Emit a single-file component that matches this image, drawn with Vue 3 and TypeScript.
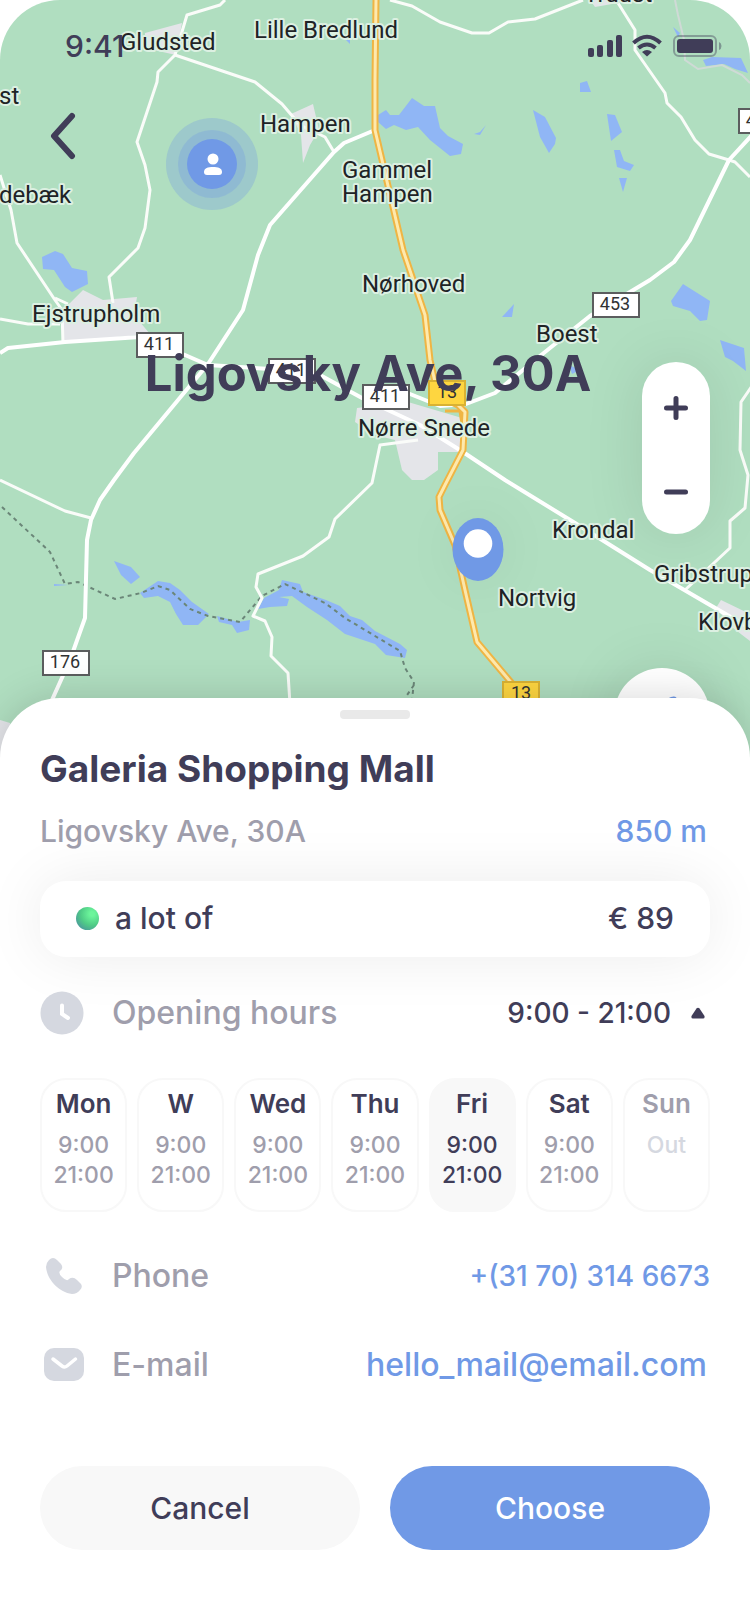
<script setup lang="ts">
import { ref } from 'vue'

interface Place { name: string; x: number; y: number }
interface Sign { label: string; x: number; y: number }
interface Day { name: string; open: string; close?: string; state?: 'current' | 'closed' }

const places: Place[] = [
  { name: 'Gludsted', x: 120, y: 50 },
  { name: 'Lille Bredlund', x: 254, y: 38 },
  { name: 'Truust', x: 584, y: 2 },
  { name: 'Hampen', x: 260, y: 132 },
  { name: 'Gammel', x: 342, y: 178 },
  { name: 'Hampen', x: 342, y: 202 },
  { name: 'Nørhoved', x: 362, y: 292 },
  { name: 'Ejstrupholm', x: 32, y: 322 },
  { name: 'Boest', x: 536, y: 342 },
  { name: 'Nørre Snede', x: 358, y: 436 },
  { name: 'Krondal', x: 552, y: 538 },
  { name: 'Gribstrup', x: 654, y: 582 },
  { name: 'Nortvig', x: 498, y: 606 },
  { name: 'Klovborg', x: 698, y: 630 },
  { name: 'debæk', x: -1, y: 203 },
  { name: 'st', x: -1, y: 104 },
]

const signs: Sign[] = [
  { label: '411', x: 137, y: 333 },
  { label: '411', x: 269, y: 359 },
  { label: '411', x: 363, y: 385 },
  { label: '453', x: 593, y: 293 },
  { label: '176', x: 43, y: 651 },
  { label: '453', x: 739, y: 109 },
]

const mainSigns: Sign[] = [
  { label: '13', x: 429, y: 381 },
  { label: '13', x: 503, y: 682 },
]

const days: Day[] = [
  { name: 'Mon', open: '9:00', close: '21:00' },
  { name: 'W', open: '9:00', close: '21:00' },
  { name: 'Wed', open: '9:00', close: '21:00' },
  { name: 'Thu', open: '9:00', close: '21:00' },
  { name: 'Fri', open: '9:00', close: '21:00', state: 'current' },
  { name: 'Sat', open: '9:00', close: '21:00' },
  { name: 'Sun', open: 'Out', state: 'closed' },
]

const expanded = ref(true)
</script>

<template>
  <main class="screen">
    <section class="map">
      <svg class="canvas" viewBox="0 0 750 774" preserveAspectRatio="xMidYMin slice" aria-hidden="true">
        <rect width="750" height="774" fill="#b0dec0" />
        <g fill="#e4e5e9">
          <path d="M145 33 182 23 176 55 145 48Z" />
          <path d="M291 114 313 104 319 130 310 145 303 163 301 135Z" />
          <path d="M83 290 103 300 137 297 134 315 150 334 64 342 61 310 70 303Z" />
          <path d="M357 408 408 402 462 418 460 452 438 452 438 470 424 480 412 480 402 470 395 440 375 435 355 422Z" />
          <path d="M716 608 721 600 750 614V641L733 628Z" />
          <path d="M0 720 10 723 20 774H0Z" />
          <path d="M590 0 595 7 612 4 616 0Z" />
        </g>
        <g fill="#90b6f5">
          <path d="M378 115 386 110 390 115 399 115 412 98 424 106H435L440 128 448 136 463 144 461 154 450 156 430 140 418 127 406 130 394 125 386 129 378 122Z" />
          <path d="M474 134 480 132 486 125 480 135Z" />
          <path d="M533 110 545 117 556 138 555 144 549 153 540 137Z" />
          <path d="M580 83 587 81 591 92H580Z" />
          <path d="M607 114 615 115 622 132 611 141Z" />
          <path d="M614 150 620 150 624 161 634 165 630 171 617 167Z" />
          <path d="M619 178H627L623 192Z" />
          <path d="M703 60 712 57 741 58 748 73 735 69 724 64 706 66Z" />
          <path d="M673 27 680 33 678 37Z" />
          <path d="M344 38H350V44Z" />
          <path d="M42 257 55 251 63 254 72 268 87 271 88 284 72 292 65 287 54 270 43 269Z" />
          <path d="M671 301 683 284 710 301 707 320 700 321 690 311 673 306Z" />
          <path d="M720 340 744 348 746 371 733 361 725 357Z" />
          <path d="M502 317 514 304 512 317Z" />
          <path d="M569 365 580 370 572 374Z" />
          <path d="M114 561 131 567 140 577 131 584 121 575Z" />
          <path d="M54 584 68 585 54 586Z" />
          <path d="M140 593 158 581 170 583 180 590 192 602 209 614 198 625 183 625 176 614 170 602 158 596 144 598Z" />
          <path d="M217 616 238 622 250 620 249 630 237 633 232 625 219 622Z" />
          <path d="M258 609 264 598 279 590 282 580 300 584 303 592 326 600 340 606 350 616 362 620 375 631 400 644 407 650 405 658 386 655 375 644 345 634 327 620 307 607 292 596 279 597 289 599 287 606 270 607Z" />
        </g>
        <path
          d="M2 507 50 552 65 584 78 582 115 599 141 593 158 586 170 590 190 609 208 616 240 622 262 596 285 584 325 603 345 618 400 651 405 668 414 682 412 700M414 685 405 698"
          fill="none" stroke="#6b8678" stroke-width="2" stroke-dasharray="4 4"
        />
        <path
          d="M675 0 678 15 684 40 685 60 698 69 722 65 742 75 750 83"
          fill="none" stroke="#cfdad6" stroke-width="2"
        />
        <g fill="none" stroke="#fafcf9" stroke-width="3" stroke-linejoin="round">
          <path d="M225 0 220 5 187 15 175 55 158 72 157 82 137 142 145 165 150 190 145 228 138 248 109 277 113 303" />
          <path d="M175 55 255 82 282 104 300 125 325 137 334 152" />
          <path d="M0 175 11 210 17 243 55 300 62 310 63 344M55 298 68 304" />
          <path d="M0 319 28 324H60" />
          <path d="M390 0 412 6 440 22 472 33H489L508 22 535 19 583 0" />
          <path d="M618 3 635 30V50L665 93 667 103 681 117 695 140 709 154 729 160 735 162 750 177" />
          <path d="M0 480 65 511 91 518" />
          <path d="M418 440 380 445 372 483 335 519 329 537 303 556 258 574 256 587 262 598 253 616 265 621 272 637 271 656 288 673 290 704" />
          <path d="M752 386 741 402 740 450 748 475 745 508 730 521V548L685 590" />
        </g>
        <g fill="none" stroke="#ffffff" stroke-width="4" stroke-linejoin="round">
          <path d="M375 130 344 143 334 152 270 225 258 255 243 310 208 364 134 453 114 480 100 500 91 520 87 540 85 618 70 660 52 700 30 760" />
          <path d="M0 353 8 348 65 342 140 337 185 355 208 365 270 369 320 375 362 398 420 425 463 452 505 480 575 523 650 570 710 605 750 628" />
          <path d="M400 390 440 406 466 404 495 393 540 356 590 316 650 280 674 262 690 240 729 160 752 135" />
        </g>
        <g fill="none" stroke-linejoin="round">
          <path d="M445 411H460L462 424" stroke="#efb544" stroke-width="3" />
          <path d="M376 0 375 80V130L403 250 425 315 430 360 438 395 458 405 465 412 463 450 445 485 439 497 440 510 455 545 465 590 477 642 520 693" stroke="#efb544" stroke-width="7" />
          <path d="M376 0 375 80V130L403 250 425 315 430 360 438 395 458 405 465 412 463 450 445 485 439 497 440 510 455 545 465 590 477 642 520 693" stroke="#fee9ad" stroke-width="3" />
        </g>
        <g v-for="(sign, i) in signs" :key="`s${i}`">
          <rect :x="sign.x" :y="sign.y" width="46" height="24" fill="#fff" stroke="#5b5d5e" stroke-width="2" />
          <text class="sign" :x="sign.x + 22" :y="sign.y + 17">{{ sign.label }}</text>
        </g>
        <g v-for="(sign, i) in mainSigns" :key="`m${i}`">
          <rect :x="sign.x" :y="sign.y" width="36" height="24" fill="#fed640" stroke="#d9b233" stroke-width="2" />
          <text class="sign" :x="sign.x + 18" :y="sign.y + 17">{{ sign.label }}</text>
        </g>
        <text v-for="(place, i) in places" :key="`p${i}`" class="place" :x="place.x" :y="place.y">{{ place.name }}</text>

        <g fill="#7099e6">
          <circle cx="212" cy="164" r="46" fill-opacity=".3" />
          <circle cx="212" cy="164" r="34" fill-opacity=".3" />
          <circle cx="212" cy="164" r="25" />
        </g>
        <g fill="#fff">
          <circle cx="213" cy="159" r="5.5" />
          <path d="M204 172c0-4 4-5 9-5s9 1 9 5c0 2-1 3-3 3h-12c-2 0-3-1-3-3Z" />
        </g>
        <g class="pin">
          <ellipse cx="478" cy="549.5" rx="25.5" ry="31.5" fill="#7099e6" />
          <circle cx="478" cy="543.5" r="14.3" fill="#fff" />
        </g>
      </svg>

      <header class="overlay">
        <div class="status">
          <span class="clock">9:41</span>
          <svg class="indicators" width="136" height="26" viewBox="586 33 136 26" aria-hidden="true">
            <g fill="#403d58">
              <rect x="588" y="48" width="6" height="9" rx="2" />
              <rect x="597" y="45" width="6" height="12" rx="2" />
              <rect x="607" y="40" width="6" height="17" rx="2" />
              <rect x="616" y="35" width="6" height="22" rx="2" />
              <rect x="677" y="39" width="36" height="14" rx="3" />
              <path d="M642 52q5-4 10 0l-5 4.500Z" />
            </g>
            <g fill="none" stroke="#403d58">
              <path d="M633.500 43q13.500-12.500 27 0" stroke-width="4" />
              <path d="M638.500 48q8.500-7 17 0" stroke-width="4" />
              <rect x="674" y="36" width="42" height="20" rx="5" stroke-width="2" stroke-opacity=".4" />
            </g>
            <path d="M719 42q2.500 1 2.500 4t-2.500 4Z" fill="#403d58" fill-opacity=".45" />
          </svg>
        </div>
        <button class="back" type="button" aria-label="Back">
          <svg width="28" height="48" viewBox="0 0 28 48"><path d="M24 4 6 24 24 44" fill="none" stroke="#403d58" stroke-width="6" stroke-linecap="round" stroke-linejoin="round" /></svg>
        </button>
      </header>

      <h2 class="map-title">Ligovsky Ave, 30A</h2>

      <div class="zoom">
        <button type="button" aria-label="Zoom in">
          <svg width="24" height="24" viewBox="0 0 24 24"><path d="M12 2.500V21.500M2.500 12H21.500" stroke="#403d58" stroke-width="5" stroke-linecap="round" /></svg>
        </button>
        <button type="button" aria-label="Zoom out">
          <svg width="24" height="24" viewBox="0 0 24 24"><path d="M2.500 12H21.500" stroke="#403d58" stroke-width="5" stroke-linecap="round" /></svg>
        </button>
      </div>
      <button class="locate" type="button" aria-label="My location">
        <svg width="40" height="40" viewBox="0 0 40 40"><path d="M29 1Q36-1 35 6L25 34Q22 38 20 33L17 23 5 18Q2 15 6 12Z" fill="#7099e6" /></svg>
      </button>
    </section>

    <section class="sheet">
      <div class="handle"></div>
      <h1>Galeria Shopping Mall</h1>
      <div class="row address">
        <span>Ligovsky Ave, 30A</span>
        <span class="distance">850 m</span>
      </div>

      <div class="row card">
        <span class="dot"></span>
        <span>a lot of</span>
        <span class="end">€ 89</span>
      </div>

      <div class="row info hours">
        <svg class="icon" width="44" height="44" viewBox="0 0 44 44" aria-hidden="true">
          <circle cx="22" cy="22" r="21.500" fill="#d5d8e0" />
          <path d="M22 14.500V23L28 27" fill="none" stroke="#fff" stroke-width="4" stroke-linecap="round" />
        </svg>
        <span>Opening hours</span>
        <button class="end figures toggle" type="button" :aria-expanded="expanded" @click="expanded = !expanded">
          9:00 - 21:00
          <svg :class="{ flipped: !expanded }" width="14" height="12" viewBox="0 0 14 12"><path d="M5.500 1.500Q7 0 8.500 1.500L13.500 9Q14 11.500 12 11.500H2Q0 11.500 .5 9Z" fill="#403d58" /></svg>
        </button>
      </div>

      <ul v-show="expanded" class="days">
        <li v-for="day in days" :key="day.name" :class="day.state">
          <strong>{{ day.name }}</strong>
          <span>{{ day.open }}</span>
          <span v-if="day.close">{{ day.close }}</span>
        </li>
      </ul>

      <div class="row info phone">
        <svg class="icon" width="44" height="44" viewBox="40 1254 44 44" aria-hidden="true">
          <path d="M49 1260Q53 1256 57 1260L61 1264Q64 1268 60 1271 58 1273 62 1277 67 1282 69 1279 73 1276 77 1280L81 1284Q83 1287 80 1290 77 1294 72 1294C58 1292 47 1279 46 1267Q46 1263 49 1260Z" fill="#d5d8e0" />
        </svg>
        <span>Phone</span>
        <a class="end figures" href="tel:+31703146673">+(31 70) 314 6673</a>
      </div>

      <div class="row info email">
        <svg class="icon" width="44" height="44" viewBox="40 1343 44 44" aria-hidden="true">
          <rect x="44" y="1348" width="40" height="33" rx="10" fill="#d5d8e0" />
          <path d="M53 1359 62 1366Q64.500 1368 67 1366L75.500 1359" fill="none" stroke="#fff" stroke-width="3.500" stroke-linecap="round" />
        </svg>
        <span>E-mail</span>
        <a class="end" href="mailto:hello_mail@email.com">hello_mail@email.com</a>
      </div>

      <div class="actions">
        <button type="button">Cancel</button>
        <button class="primary" type="button">Choose</button>
      </div>
    </section>
  </main>
</template>

<style>
body {
  background: #fff;
}
</style>

<style scoped>
.screen {
  min-height: 100vh;
  overflow: hidden;
  border-radius: 60px 60px 0 0;
  background: #fff;
  color: #403d58;
  font: 500 30px/40px Inter, "Liberation Sans", sans-serif;
}
button {
  margin: 0;
  padding: 0;
  border: 0;
  background: none;
  color: inherit;
  font: inherit;
  cursor: pointer;
}
svg {
  display: block;
}
.map {
  position: relative;
  aspect-ratio: 750 / 774;
}
.canvas {
  position: absolute;
  inset: 0;
  width: 100%;
  height: 100%;
}
.place,
.sign {
  font-family: Roboto, "Liberation Sans", sans-serif;
  font-weight: 400;
}
.place {
  fill: #202326;
  stroke: #dcf0e2;
  stroke-width: 4px;
  stroke-linejoin: round;
  paint-order: stroke;
  font-size: 24px;
}
.sign {
  fill: #303233;
  font-size: 18px;
  text-anchor: middle;
}
.pin {
  filter: drop-shadow(0 0 24px rgba(0, 0, 0, 0.05));
}
.overlay {
  position: absolute;
  top: 0;
  left: 0;
  right: 0;
}
.status {
  display: flex;
  align-items: center;
  justify-content: space-between;
  padding: 26px 28px 0 65px;
}
.back {
  margin: 46px 0 0 48px;
}
.map-title {
  position: absolute;
  top: 344px;
  left: 0;
  right: 0;
  margin: 0;
  padding-right: 14px;
  font-size: 49px;
  line-height: 60px;
  font-weight: 700;
  text-align: center;
}
.zoom {
  position: absolute;
  top: 362px;
  right: 40px;
  display: grid;
  width: 68px;
  padding-top: 4px;
  border-radius: 34px;
  background: #fff;
  box-shadow: 0 0 60px rgba(0, 0, 0, 0.1);
}
.zoom button {
  display: grid;
  height: 84px;
  place-items: center;
}
.locate {
  position: absolute;
  top: 668px;
  right: 40px;
  display: grid;
  width: 96px;
  height: 96px;
  place-items: center;
  border-radius: 50%;
  background: #fff;
  box-shadow: 0 0 60px rgba(0, 0, 0, 0.1);
}
.sheet {
  position: relative;
  display: flex;
  flex-direction: column;
  margin-top: -76px;
  padding: 12px 40px 74px;
  border-radius: 60px 60px 0 0;
  background: #fff;
  box-shadow: 0 0 40px rgba(0, 0, 0, 0.16);
}
.handle {
  align-self: center;
  width: 70px;
  height: 9px;
  border-radius: 4px;
  background: #e9e9e9;
}
h1 {
  margin: 28px 0 20px;
  font-size: 37px;
  line-height: 44px;
  font-weight: 700;
}
.row {
  display: flex;
  align-items: center;
}
.end {
  margin-left: auto;
}
.address {
  justify-content: space-between;
  margin-bottom: 30px;
  color: #9f9eac;
}
.distance,
a {
  color: #7099e6;
  text-decoration: none;
}
.distance {
  padding-right: 3px;
}
.card {
  box-sizing: border-box;
  height: 76px;
  padding: 0 36px 2px;
  border-radius: 26px;
  background: #fff;
  box-shadow: 0 0 60px rgba(0, 0, 0, 0.08);
}
.dot {
  width: 23px;
  height: 23px;
  margin-right: 16px;
  border-radius: 50%;
  background: radial-gradient(circle at 70% 30%, #6cf59b 10%, #4fcb86 50%, #4a8fa0 90%);
}
.info {
  height: 44px;
  color: #9f9eac;
  font-size: 32px;
}
.figures {
  font-size: 28px;
}
.icon {
  flex: none;
  margin-right: 28px;
}
.hours {
  margin-top: 34px;
}
.toggle {
  display: flex;
  align-items: center;
  gap: 20px;
  padding-right: 5px;
  color: #403d58;
}
.flipped {
  transform: rotate(180deg);
}
.days {
  display: grid;
  grid-template-columns: repeat(7, 1fr);
  gap: 10px;
  margin: 43px 0 0;
  padding: 0;
  list-style: none;
}
.days li {
  display: flex;
  flex-direction: column;
  min-height: 134px;
  box-sizing: border-box;
  padding-top: 8px;
  border: 2px solid #f8f8f8;
  border-radius: 26px;
  color: #9f9eac;
  font-size: 23px;
  line-height: 30px;
  text-align: center;
}
.days strong {
  margin-bottom: 10px;
  color: #403d58;
  font-size: 26px;
  line-height: 32px;
  font-weight: 600;
}
.days .current {
  background: #f8f8f8;
  color: #403d58;
}
.days .closed {
  color: #d5d8e0;
}
.days .closed strong {
  color: #9f9eac;
}
.phone {
  margin-top: 42px;
}
.email {
  margin-top: 45px;
}
.email a {
  padding-right: 3px;
}
.actions {
  display: grid;
  grid-template-columns: 1fr 1fr;
  gap: 30px;
  margin-top: 79px;
}
.actions button {
  height: 84px;
  border-radius: 42px;
  background: #f8f8f8;
}
.actions .primary {
  background: #7099e6;
  color: #fff;
}
</style>
